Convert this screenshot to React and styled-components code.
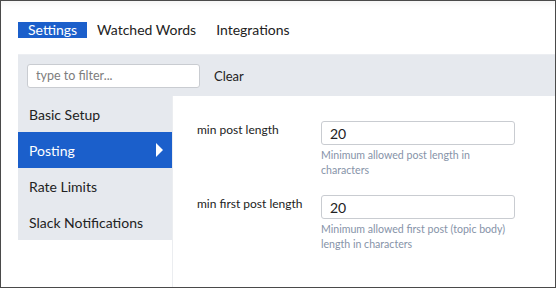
import React from "react";
import styled, { createGlobalStyle } from "styled-components";

const GlobalStyle = createGlobalStyle`
  html, body {
    margin: 0;
    padding: 0;
    background: #fff;
  }
  body {
    font-family: "Lato", "Liberation Sans", sans-serif;
    color: #222;
  }
`;

const tabs = ["Settings", "Watched Words", "Integrations"];
const sections = ["Basic Setup", "Posting", "Rate Limits", "Slack Notifications"];
const fields = [
  {
    label: "min post length",
    value: "20",
    help: "Minimum allowed post length in characters",
  },
  {
    label: "min first post length",
    value: "20",
    help: "Minimum allowed first post (topic body) length in characters",
  },
];

function App() {
  return (
    <>
      <GlobalStyle />
      <Frame>
        <Tabs>
          {tabs.map((t, i) => (
            <Tab key={t} active={i === 0}>
              {t}
            </Tab>
          ))}
        </Tabs>
        <FilterBar>
          <FilterInput placeholder="type to filter..." />
          <ClearButton>Clear</ClearButton>
        </FilterBar>
        <Body>
          <Sidebar>
            {sections.map((s) => (
              <NavItem key={s} active={s === "Posting"}>
                {s}
                {s === "Posting" && (
                  <svg width="7" height="14" viewBox="0 0 7 14">
                    <path d="M0 0 L7 7 L0 14 Z" fill="#fff" />
                  </svg>
                )}
              </NavItem>
            ))}
          </Sidebar>
          <Content>
            {fields.map((f) => (
              <Row key={f.label}>
                <Label>{f.label}</Label>
                <Field>
                  <ValueInput defaultValue={f.value} />
                  <Help>{f.help}</Help>
                </Field>
              </Row>
            ))}
          </Content>
        </Body>
      </Frame>
    </>
  );
}

const Frame = styled.div`
  width: 556px;
  height: 288px;
  box-sizing: border-box;
  border: 1px solid #4a4a4a;
  box-shadow: inset 0 7px 8px -6px rgba(0, 0, 0, 0.07);
  padding: 21px 0 0 17px;
  display: flex;
  flex-direction: column;
  overflow: hidden;
`;

const Tabs = styled.div`
  display: flex;
  height: 16px;
  margin-bottom: 16px;
`;

const Tab = styled.div`
  padding: 0 10px;
  height: 16px;
  line-height: 16px;
  font-size: 14px;
  background: ${(p) => (p.active ? "#1b5fcb" : "transparent")};
  color: ${(p) => (p.active ? "#fff" : "#222")};
`;

const FilterBar = styled.div`
  display: flex;
  align-items: center;
  background: #e6e9ee;
  border-top: 1px solid #eceef2;
  height: 42px;
  box-sizing: border-box;
  padding: 0 9px;
  gap: 14px;
`;

const FilterInput = styled.input`
  width: 173px;
  height: 24px;
  box-sizing: border-box;
  border: 1px solid #c9ccd1;
  border-radius: 3px;
  padding: 0 8px;
  font-family: inherit;
  font-size: 12.5px;
  background: #fff;
  outline: none;
  &::placeholder {
    color: #7d7d7d;
  }
`;

const ClearButton = styled.span`
  font-size: 13px;
  color: #222;
`;

const Body = styled.div`
  display: flex;
  flex: 1;
`;

const Sidebar = styled.div`
  width: 154px;
  align-self: flex-start;
  background: #e6e9ee;
  display: flex;
  flex-direction: column;
`;

const NavItem = styled.div`
  height: 36px;
  display: flex;
  align-items: center;
  justify-content: space-between;
  padding: 0 9px 0 11px;
  font-size: 14px;
  background: ${(p) => (p.active ? "#1b5fcb" : "transparent")};
  color: ${(p) => (p.active ? "#fff" : "#222")};
`;

const Content = styled.div`
  flex: 1;
  border-left: 1px solid #ebedf0;
  background: #fff;
  padding: 25px 0 0 24px;
  display: flex;
  flex-direction: column;
  gap: 17px;
`;

const Row = styled.div`
  display: flex;
`;

const Label = styled.div`
  width: 124px;
  font-size: 12px;
  padding-top: 1px;
  color: #222;
`;

const Field = styled.div`
  width: 194px;
  display: flex;
  flex-direction: column;
`;

const ValueInput = styled.input`
  width: 194px;
  height: 24px;
  box-sizing: border-box;
  border: 1px solid #c9ccd1;
  border-radius: 3px;
  padding: 0 8px;
  font-family: inherit;
  font-size: 14px;
  color: #222;
  outline: none;
`;

const Help = styled.div`
  margin-top: 3px;
  font-size: 10.6px;
  line-height: 15px;
  color: #8693a8;
`;

export default App;
